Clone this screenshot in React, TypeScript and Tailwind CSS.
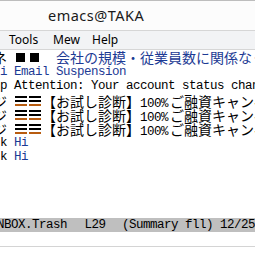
import React from "react";

const mono = { fontFamily: '"Liberation Mono", "DejaVu Sans Mono", monospace' };

function J({ children, className = "" }: { children: React.ReactNode; className?: string }) {
  return (
    <span
      className={"text-[14px] tracking-[0px] " + className}
      style={{ fontFamily: '"Noto Sans CJK JP", "Noto Sans CJK SC", sans-serif' }}
    >
      {children}
    </span>
  );
}

function Sq() {
  return (
    <span className="inline-flex w-[14px] h-[14px] items-center justify-start align-top pl-[2px]">
      <span className="block w-[9px] h-[9px] bg-black" />
    </span>
  );
}

function Tri() {
  return (
    <span className="inline-flex w-[14px] h-[14px] flex-col justify-center gap-[2px] align-top pl-[1px]">
      <span className="block w-[12px] h-[2px] bg-black" />
      <span className="block w-[12px] h-[2px] bg-black" />
      <span className="block w-[12px] h-[2px] bg-[#b85c10]" />
    </span>
  );
}

function Line({ children, tall = false }: { children?: React.ReactNode; tall?: boolean }) {
  return (
    <div
      className={
        (tall ? "h-[15px] leading-[15px] " : "h-[14px] leading-[14px] ") +
        "whitespace-pre text-[12.5px] tracking-[-0.5px] text-black overflow-visible"
      }
    >
      {children}
    </div>
  );
}

export default function App() {
  const blue = "text-[#1c3a94]";
  return (
    <div className="w-[255px] h-[255px] overflow-hidden bg-white flex flex-col">
      {/* title bar */}
      <div className="h-[30px] border-t border-[#bdbdbd] bg-[#fcfcfc] flex items-center pl-[48px] shrink-0">
        <span
          className="text-[14.5px] tracking-[0.5px] text-[#1a1a1a] leading-none"
          style={{ fontFamily: '"Noto Sans", "Open Sans", sans-serif' }}
        >
          emacs@TAKA
        </span>
      </div>
      {/* menu bar */}
      <div
        className="h-[20px] border-y border-[#d6d6d6] bg-[#f2f3f5] flex items-center pl-[9px] text-[12px] text-black shrink-0"
        style={{ fontFamily: '"Noto Sans", "Open Sans", sans-serif' }}
      >
        <span className="w-[44px]">Tools</span>
        <span className="w-[39px]">Mew</span>
        <span>Help</span>
      </div>
      {/* summary buffer */}
      <div className="flex-1 flex flex-col overflow-hidden" style={mono}>
        <div className="h-[168px] overflow-hidden">
          <Line tall>
            <span className="inline-block ml-[-7px]"><J>ネ</J></span>
            {" "}
            <Sq />
            <Sq />
            {"  "}
            <J className={blue}>会社の規模・従業員数に関係なく</J>
          </Line>
          <Line>
            <span className={blue}>i Email Suspension</span>
          </Line>
          <Line tall>p Attention: Your account status changed</Line>
          {[0, 1, 2].map((i) => (
            <Line key={i}>
              <span className="inline-block ml-[-7px]"><J>ジ</J></span>
              {" "}
              <Tri />
              <Tri />
              <J>【お試し診断】</J>
              <span className="mr-[2px]">100%</span>
              <J>ご融資キャンペーン</J>
            </Line>
          ))}
          <Line>
            k <span className={blue}>Hi</span>
          </Line>
          <Line>
            k <span className={blue}>Hi</span>
          </Line>
        </div>
        {/* mode line */}
        <div className="h-[14px] leading-[14px] bg-[#bfbfbf] whitespace-pre text-[12.5px] tracking-[-0.5px] text-black shrink-0 overflow-hidden flex">
          <span className="ml-[-3px] w-[91px]">NBOX.Trash</span>
          <span className="w-[39px]">L29</span>
          <span>(Summary fll) 12/25</span>
        </div>
        {/* minibuffer */}
        <div className="h-[15px] bg-white border-b border-[#d4d4d4] shrink-0" />
        <div className="flex-1 bg-white" />
      </div>
    </div>
  );
}
